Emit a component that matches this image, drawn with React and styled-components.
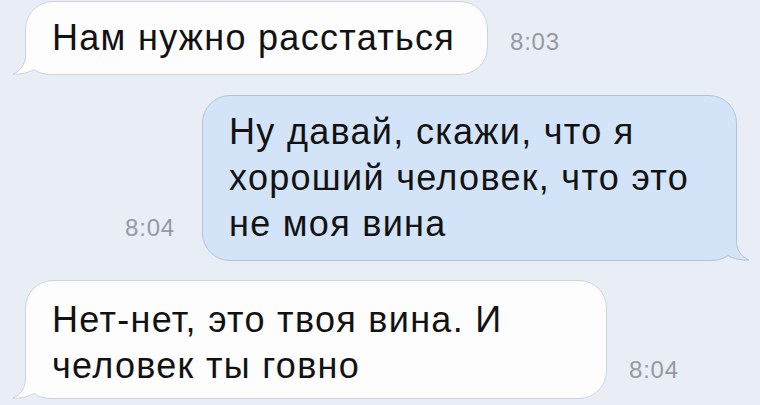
import styled, { createGlobalStyle } from "styled-components"

const GlobalStyle = createGlobalStyle`
    html, body {
        margin: 0;
        padding: 0;
        background: #e9eef6;
    }
`;

function Tail({ $side, $fill, $stroke }) {
    return (
        <TailSvg $side={$side} width="40" height="34" viewBox="0 0 40 34">
            <path
                d="M13.5 0 L13.5 14 C13.5 24 8 30 1 33 C8 33.6 16 32 22 28.5 C26 31.5 32 33.5 40 33.5 L40 0 Z"
                fill={$fill}
            />
            <path
                d="M13.5 0 L13.5 14 C13.5 24 8 30 1 33 C8 33.6 16 32 22 28.5 C26 31.5 32 33.5 40 33.5"
                fill="none"
                stroke={$stroke}
                strokeWidth="1"
            />
        </TailSvg>
    )
}

export default function App() {
    return (
        <>
            <GlobalStyle />
            <Chat>
                <Row>
                    <Bubble $width={463}>
                        Нам нужно расстаться
                        <Tail $side="left" $fill="#fdfdfe" $stroke="#cdd3dc" />
                    </Bubble>
                    <Time>8:03</Time>
                </Row>
                <Row $mine>
                    <Time>8:04</Time>
                    <Bubble $mine $width={535}>
                        Ну давай, скажи, что я<br />
                        хороший человек, что это<br />
                        не моя вина
                        <Tail $side="right" $fill="#d3e3f8" $stroke="#b4c3d6" />
                    </Bubble>
                </Row>
                <Row $last>
                    <Bubble $width={582} $top={16} $bottom={9}>
                        Нет-нет, это твоя вина. И<br />
                        человек ты говно
                        <Tail $side="left" $fill="#fdfdfe" $stroke="#cdd3dc" />
                    </Bubble>
                    <Time>8:04</Time>
                </Row>
            </Chat>
        </>
    )
}

const Chat = styled.div`
    width: 760px;
    height: 405px;
    overflow: hidden;
    box-sizing: border-box;
    padding-top: 1px;
    display: flex;
    flex-direction: column;
    gap: 20px;
    background: #e9eef6;
`;

const Row = styled.div`
    display: flex;
    align-items: last baseline;
    justify-content: ${props => props.$mine ? "flex-end" : "flex-start"};
    gap: ${props => props.$mine ? 27 : 22}px;
    padding: ${props => props.$mine ? "0 23px 0 0" : "0 0 0 25px"};
    margin-top: ${props => props.$last ? -1 : 0}px;
`;

const Bubble = styled.div`
    position: relative;
    box-sizing: border-box;
    width: ${props => props.$width}px;
    padding: ${props => props.$top ?? 13}px 20px ${props => props.$bottom ?? 13}px 26px;
    border-radius: 28px;
    border: 1px solid ${props => props.$mine ? "#b4c3d6" : "#cdd3dc"};
    background: ${props => props.$mine ? "#d3e3f8" : "#fdfdfe"};
    color: #121212;
    font-family: "Liberation Sans", Arial, sans-serif;
    font-size: 36px;
    line-height: 46px;
    letter-spacing: 1.3px;
    white-space: nowrap;
`;

const TailSvg = styled.svg`
    position: absolute;
    bottom: -1px;
    ${props => props.$side === "left" ? "left: -14px;" : "right: -14px; transform: scaleX(-1);"}
    overflow: visible;
`;

const Time = styled.div`
    font-family: "Liberation Sans", Arial, sans-serif;
    font-size: 24px;
    color: #96999f;
    letter-spacing: 0.8px;
`;
